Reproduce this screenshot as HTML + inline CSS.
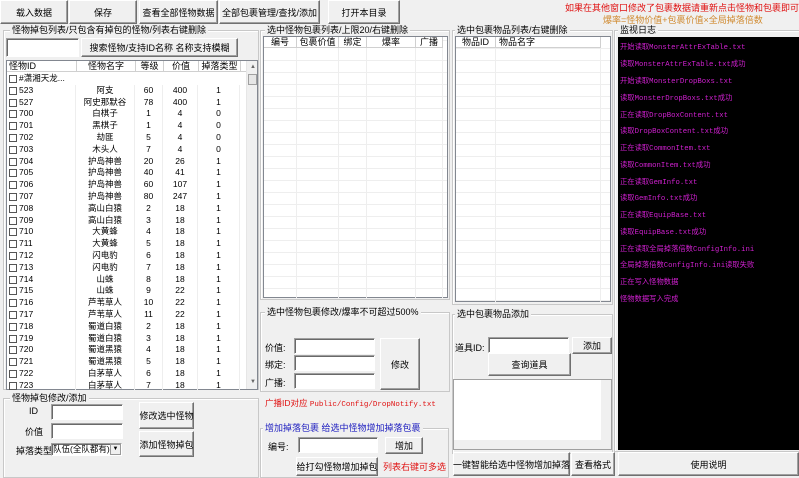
<!DOCTYPE html>
<html><head><meta charset="utf-8">
<style>
*{box-sizing:border-box;margin:0;padding:0}
body{width:799px;height:476px;background:#f0f0f0;position:relative;overflow:hidden;font-family:"Liberation Sans","Noto Sans CJK SC",sans-serif;font-size:9px;color:#000}
.a{position:absolute}
.btn{position:absolute;background:#f0f0f0;border:1px solid;border-color:#fff #707070 #707070 #fff;box-shadow:inset -1px -1px 0 #a0a0a0;display:flex;align-items:center;justify-content:center;font-size:9px;white-space:nowrap}
.tb{position:absolute;background:#fff;border:1px solid;border-color:#a0a0a0 #fff #fff #a0a0a0;box-shadow:inset 1px 1px 0 #696969}
.grp{position:absolute;border:1px solid #c8c8c8;box-shadow:1px 1px 0 #fff inset}
.gt{position:absolute;top:-7px;left:6px;background:#f0f0f0;padding:0 2px;font-size:9px;white-space:nowrap;line-height:12px}
.lst{position:absolute;background:#fff;border:1px solid #828790}
.hd{position:absolute;top:0;height:11px;border-right:1px solid #d0d0d0;border-bottom:1px solid #d0d0d0;background:#fff;font-size:9px;line-height:10px;text-align:center}
.row{position:absolute;left:0;height:11.8px;width:238px;font-size:8.5px;line-height:11.8px}
.row span{position:absolute;top:0;text-align:center;border-right:1px solid #eee;height:100%}
.cb{position:absolute;left:3px;top:2px;width:8px;height:8px;border:1px solid #555;background:#fff}
.log div{position:absolute;left:2px;font-family:"Liberation Mono","Noto Sans CJK SC",monospace;font-size:7.3px;color:#d020d0;white-space:nowrap;line-height:10px}
.red{color:#e01010}
</style></head><body>

<!-- top buttons -->
<div class="btn" style="left:0;top:0;width:68px;height:24px">载入数据</div>
<div class="btn" style="left:69px;top:0;width:68px;height:24px">保存</div>
<div class="btn" style="left:139px;top:0;width:79px;height:24px">查看全部怪物数据</div>
<div class="btn" style="left:219px;top:0;width:101px;height:24px">全部包裹管理/查找/添加</div>
<div class="btn" style="left:328px;top:0;width:72px;height:24px">打开本目录</div>
<div class="a red" style="left:565px;top:1px;font-size:9px;white-space:nowrap">如果在其他窗口修改了包裹数据请重新点击怪物和包裹即可刷新</div>
<div class="a" style="left:603px;top:13px;font-size:9px;color:#d08a30;white-space:nowrap">爆率=怪物价值+包裹价值×全局掉落倍数</div>

<!-- left group -->
<div class="grp" style="left:3px;top:30px;width:256px;height:360px"><div class="gt">怪物掉包列表/只包含有掉包的怪物/列表右键删除</div></div>
<div class="tb" style="left:6px;top:38px;width:73px;height:19px"></div>
<div class="btn" style="left:81px;top:38px;width:157px;height:19px">搜索怪物/支持ID名称 名称支持模糊</div>
<div class="lst" style="left:6px;top:60px;width:252px;height:330px;overflow:hidden">
 <div class="hd" style="left:0;width:70px;text-align:left;padding-left:2px">怪物ID</div>
 <div class="hd" style="left:70px;width:59px">怪物名字</div>
 <div class="hd" style="left:129px;width:28px">等级</div>
 <div class="hd" style="left:157px;width:35px">价值</div>
 <div class="hd" style="left:192px;width:42px">掉落类型</div>
 <div class="hd" style="left:234px;width:6px;border-right:none"></div>
 <div class="a" style="left:239px;top:0;width:12px;height:330px;background:#f0f0f0;border-left:1px solid #e6e6e6"></div>
 <div class="a" style="left:243px;top:3px;font-size:6px;color:#666">▲</div>
 <div class="a" style="left:241px;top:13px;width:9px;height:11px;background:#e6e6e6;border:1px solid #a0a0a0"></div>
 <div class="a" style="left:243px;top:318px;font-size:6px;color:#666">▼</div>
 <div id="rows" class="a" style="left:0;top:13px;width:238px;height:320px"></div>
</div>

<!-- bottom left group -->
<div class="grp" style="left:3px;top:398px;width:256px;height:80px"><div class="gt">怪物掉包修改/添加</div></div>
<div class="a" style="left:29px;top:406px">ID</div>
<div class="tb" style="left:51px;top:404px;width:72px;height:16px"></div>
<div class="a" style="left:25px;top:425px">价值</div>
<div class="tb" style="left:51px;top:423px;width:72px;height:16px"></div>
<div class="a" style="left:16px;top:444px">掉落类型</div>
<div class="tb" style="left:51px;top:443px;width:71px;height:13px;font-size:8.5px;line-height:11px;padding-left:1px;overflow:hidden;white-space:nowrap">队伍(全队都有)</div>
<div class="a" style="left:110px;top:444px;width:11px;height:11px;background:#f0f0f0;border:1px solid #999;font-size:6px;text-align:center;line-height:9px">▼</div>
<div class="btn" style="left:139px;top:402px;width:55px;height:27px">修改选中怪物</div>
<div class="btn" style="left:139px;top:431px;width:55px;height:26px">添加怪物掉包</div>

<!-- middle group -->
<div class="grp" style="left:260px;top:30px;width:190px;height:270px"><div class="gt" style="left:4px">选中怪物包裹列表/上限20/右键删除</div></div>
<div class="lst" style="left:263px;top:36px;width:185px;height:262px;background:#fff repeating-linear-gradient(#fff 0 11px,#eee 11px 12px);background-position:0 12px">
 <div class="hd" style="left:0;width:33px">编号</div>
 <div class="hd" style="left:33px;width:42px">包裹价值</div>
 <div class="hd" style="left:75px;width:28px">绑定</div>
 <div class="hd" style="left:103px;width:49px">爆率</div>
 <div class="hd" style="left:152px;width:27px">广播</div>
 <div class="a" style="left:32px;top:11px;width:1px;height:250px;background:#eee"></div>
 <div class="a" style="left:74px;top:11px;width:1px;height:250px;background:#eee"></div>
 <div class="a" style="left:102px;top:11px;width:1px;height:250px;background:#eee"></div>
 <div class="a" style="left:151px;top:11px;width:1px;height:250px;background:#eee"></div>
 <div class="a" style="left:178px;top:11px;width:1px;height:250px;background:#eee"></div>
</div>

<div class="grp" style="left:260px;top:312px;width:190px;height:80px"><div class="gt" style="left:4px">选中怪物包裹修改/爆率不可超过500%</div></div>
<div class="a" style="left:265px;top:341px">价值:</div>
<div class="a" style="left:265px;top:358px">绑定:</div>
<div class="a" style="left:265px;top:376px">广播:</div>
<div class="tb" style="left:294px;top:338px;width:81px;height:16px"></div>
<div class="tb" style="left:294px;top:355px;width:81px;height:16px"></div>
<div class="tb" style="left:294px;top:373px;width:81px;height:16px"></div>
<div class="btn" style="left:380px;top:338px;width:40px;height:52px">修改</div>
<div class="a red" style="left:265px;top:397px;font-size:8.5px;white-space:nowrap">广播ID对应 <span style="font-family:'Liberation Mono',monospace;font-size:7.5px">Public/Config/DropNotify.txt</span></div>

<div class="grp" style="left:260px;top:428px;width:189px;height:50px"><div class="gt" style="left:2px;color:#2020c0">增加掉落包裹 给选中怪物增加掉落包裹</div></div>
<div class="a" style="left:268px;top:440px">编号:</div>
<div class="tb" style="left:298px;top:437px;width:80px;height:16px"></div>
<div class="btn" style="left:385px;top:437px;width:38px;height:17px">增加</div>
<div class="btn" style="left:296px;top:457px;width:82px;height:19px">给打勾怪物增加掉包</div>
<div class="a red" style="left:383px;top:460px;white-space:nowrap">列表右键可多选</div>

<!-- right-middle group -->
<div class="grp" style="left:452px;top:30px;width:161px;height:275px"><div class="gt" style="left:2px">选中包裹物品列表/右键删除</div></div>
<div class="lst" style="left:455px;top:36px;width:156px;height:266px;background:#fff repeating-linear-gradient(#fff 0 11px,#eee 11px 12px);background-position:0 12px">
 <div class="hd" style="left:0;width:40px">物品ID</div>
 <div class="hd" style="left:40px;width:105px;text-align:left;padding-left:3px">物品名字</div>
 <div class="a" style="left:39px;top:11px;width:1px;height:254px;background:#eee"></div>
 <div class="a" style="left:144px;top:11px;width:1px;height:254px;background:#eee"></div>
</div>

<div class="grp" style="left:452px;top:314px;width:161px;height:140px"><div class="gt" style="left:2px">选中包裹物品添加</div></div>
<div class="a" style="left:455px;top:341px">道具ID:</div>
<div class="tb" style="left:488px;top:337px;width:81px;height:16px"></div>
<div class="btn" style="left:572px;top:337px;width:40px;height:17px">添加</div>
<div class="btn" style="left:488px;top:353px;width:83px;height:23px">查询道具</div>
<div class="a" style="left:453px;top:379px;width:159px;height:71px;background:#fff;border:1px solid #a0a0a0"></div>
<div class="a" style="left:601px;top:380px;width:10px;height:69px;background:#f0f0f0"></div>
<div class="a" style="left:454px;top:440px;width:147px;height:9px;background:#f0f0f0"></div>
<div class="btn" style="left:453px;top:452px;width:117px;height:24px">一键智能给选中怪物增加掉落</div>
<div class="btn" style="left:571px;top:452px;width:44px;height:24px">查看格式</div>

<!-- monitor log -->
<div class="grp" style="left:614px;top:30px;width:186px;height:422px"><div class="gt" style="left:3px">监视日志</div></div>
<div class="a log" style="left:618px;top:37px;width:181px;height:413px;background:#000">
 <div style="top:6px">开始读取MonsterAttrExTable.txt</div>
 <div style="top:23px">读取MonsterAttrExTable.txt成功</div>
 <div style="top:40px">开始读取MonsterDropBoxs.txt</div>
 <div style="top:57px">读取MonsterDropBoxs.txt成功</div>
 <div style="top:74px">正在读取DropBoxContent.txt</div>
 <div style="top:90px">读取DropBoxContent.txt成功</div>
 <div style="top:107px">正在读取CommonItem.txt</div>
 <div style="top:124px">读取CommonItem.txt成功</div>
 <div style="top:141px">正在读取GemInfo.txt</div>
 <div style="top:157px">读取GemInfo.txt成功</div>
 <div style="top:174px">正在读取EquipBase.txt</div>
 <div style="top:191px">读取EquipBase.txt成功</div>
 <div style="top:208px">正在读取全局掉落倍数ConfigInfo.ini</div>
 <div style="top:224px">全局掉落倍数ConfigInfo.ini读取失败</div>
 <div style="top:241px">正在写入怪物数据</div>
 <div style="top:258px">怪物数据写入完成</div>
</div>
<div class="btn" style="left:618px;top:452px;width:181px;height:24px">使用说明</div>

<div id="src" style="display:none"></div>
<div class="a" style="left:0;top:0;width:0;height:0">
</div>
<div style="display:none"></div>
<div class="a" style="left:6px;top:73px;width:233px;height:317px">
<div class="row" style="top:0"><div class="cb"></div><span style="left:0;width:70px;text-align:left;padding-left:13px;border:none">#潇湘天龙...</span></div>
<div class="row" style="top:11.8px"><div class="cb"></div><span style="left:0;width:70px;text-align:left;padding-left:13px">523</span><span style="left:70px;width:59px">阿支</span><span style="left:129px;width:28px">60</span><span style="left:157px;width:35px">400</span><span style="left:192px;width:42px">1</span></div>
<div class="row" style="top:23.6px"><div class="cb"></div><span style="left:0;width:70px;text-align:left;padding-left:13px">527</span><span style="left:70px;width:59px">阿史那默谷</span><span style="left:129px;width:28px">78</span><span style="left:157px;width:35px">400</span><span style="left:192px;width:42px">1</span></div>
<div class="row" style="top:35.4px"><div class="cb"></div><span style="left:0;width:70px;text-align:left;padding-left:13px">700</span><span style="left:70px;width:59px">白棋子</span><span style="left:129px;width:28px">1</span><span style="left:157px;width:35px">4</span><span style="left:192px;width:42px">0</span></div>
<div class="row" style="top:47.2px"><div class="cb"></div><span style="left:0;width:70px;text-align:left;padding-left:13px">701</span><span style="left:70px;width:59px">黑棋子</span><span style="left:129px;width:28px">1</span><span style="left:157px;width:35px">4</span><span style="left:192px;width:42px">0</span></div>
<div class="row" style="top:59px"><div class="cb"></div><span style="left:0;width:70px;text-align:left;padding-left:13px">702</span><span style="left:70px;width:59px">劫匪</span><span style="left:129px;width:28px">5</span><span style="left:157px;width:35px">4</span><span style="left:192px;width:42px">0</span></div>
<div class="row" style="top:70.8px"><div class="cb"></div><span style="left:0;width:70px;text-align:left;padding-left:13px">703</span><span style="left:70px;width:59px">木头人</span><span style="left:129px;width:28px">7</span><span style="left:157px;width:35px">4</span><span style="left:192px;width:42px">0</span></div>
<div class="row" style="top:82.6px"><div class="cb"></div><span style="left:0;width:70px;text-align:left;padding-left:13px">704</span><span style="left:70px;width:59px">护岛神兽</span><span style="left:129px;width:28px">20</span><span style="left:157px;width:35px">26</span><span style="left:192px;width:42px">1</span></div>
<div class="row" style="top:94.4px"><div class="cb"></div><span style="left:0;width:70px;text-align:left;padding-left:13px">705</span><span style="left:70px;width:59px">护岛神兽</span><span style="left:129px;width:28px">40</span><span style="left:157px;width:35px">41</span><span style="left:192px;width:42px">1</span></div>
<div class="row" style="top:106.2px"><div class="cb"></div><span style="left:0;width:70px;text-align:left;padding-left:13px">706</span><span style="left:70px;width:59px">护岛神兽</span><span style="left:129px;width:28px">60</span><span style="left:157px;width:35px">107</span><span style="left:192px;width:42px">1</span></div>
<div class="row" style="top:118px"><div class="cb"></div><span style="left:0;width:70px;text-align:left;padding-left:13px">707</span><span style="left:70px;width:59px">护岛神兽</span><span style="left:129px;width:28px">80</span><span style="left:157px;width:35px">247</span><span style="left:192px;width:42px">1</span></div>
<div class="row" style="top:129.8px"><div class="cb"></div><span style="left:0;width:70px;text-align:left;padding-left:13px">708</span><span style="left:70px;width:59px">高山白猿</span><span style="left:129px;width:28px">2</span><span style="left:157px;width:35px">18</span><span style="left:192px;width:42px">1</span></div>
<div class="row" style="top:141.6px"><div class="cb"></div><span style="left:0;width:70px;text-align:left;padding-left:13px">709</span><span style="left:70px;width:59px">高山白猿</span><span style="left:129px;width:28px">3</span><span style="left:157px;width:35px">18</span><span style="left:192px;width:42px">1</span></div>
<div class="row" style="top:153.4px"><div class="cb"></div><span style="left:0;width:70px;text-align:left;padding-left:13px">710</span><span style="left:70px;width:59px">大黄蜂</span><span style="left:129px;width:28px">4</span><span style="left:157px;width:35px">18</span><span style="left:192px;width:42px">1</span></div>
<div class="row" style="top:165.2px"><div class="cb"></div><span style="left:0;width:70px;text-align:left;padding-left:13px">711</span><span style="left:70px;width:59px">大黄蜂</span><span style="left:129px;width:28px">5</span><span style="left:157px;width:35px">18</span><span style="left:192px;width:42px">1</span></div>
<div class="row" style="top:177px"><div class="cb"></div><span style="left:0;width:70px;text-align:left;padding-left:13px">712</span><span style="left:70px;width:59px">闪电豹</span><span style="left:129px;width:28px">6</span><span style="left:157px;width:35px">18</span><span style="left:192px;width:42px">1</span></div>
<div class="row" style="top:188.8px"><div class="cb"></div><span style="left:0;width:70px;text-align:left;padding-left:13px">713</span><span style="left:70px;width:59px">闪电豹</span><span style="left:129px;width:28px">7</span><span style="left:157px;width:35px">18</span><span style="left:192px;width:42px">1</span></div>
<div class="row" style="top:200.6px"><div class="cb"></div><span style="left:0;width:70px;text-align:left;padding-left:13px">714</span><span style="left:70px;width:59px">山蛛</span><span style="left:129px;width:28px">8</span><span style="left:157px;width:35px">18</span><span style="left:192px;width:42px">1</span></div>
<div class="row" style="top:212.4px"><div class="cb"></div><span style="left:0;width:70px;text-align:left;padding-left:13px">715</span><span style="left:70px;width:59px">山蛛</span><span style="left:129px;width:28px">9</span><span style="left:157px;width:35px">22</span><span style="left:192px;width:42px">1</span></div>
<div class="row" style="top:224.2px"><div class="cb"></div><span style="left:0;width:70px;text-align:left;padding-left:13px">716</span><span style="left:70px;width:59px">芦苇草人</span><span style="left:129px;width:28px">10</span><span style="left:157px;width:35px">22</span><span style="left:192px;width:42px">1</span></div>
<div class="row" style="top:236px"><div class="cb"></div><span style="left:0;width:70px;text-align:left;padding-left:13px">717</span><span style="left:70px;width:59px">芦苇草人</span><span style="left:129px;width:28px">11</span><span style="left:157px;width:35px">22</span><span style="left:192px;width:42px">1</span></div>
<div class="row" style="top:247.8px"><div class="cb"></div><span style="left:0;width:70px;text-align:left;padding-left:13px">718</span><span style="left:70px;width:59px">蜀道白猿</span><span style="left:129px;width:28px">2</span><span style="left:157px;width:35px">18</span><span style="left:192px;width:42px">1</span></div>
<div class="row" style="top:259.6px"><div class="cb"></div><span style="left:0;width:70px;text-align:left;padding-left:13px">719</span><span style="left:70px;width:59px">蜀道白猿</span><span style="left:129px;width:28px">3</span><span style="left:157px;width:35px">18</span><span style="left:192px;width:42px">1</span></div>
<div class="row" style="top:271.4px"><div class="cb"></div><span style="left:0;width:70px;text-align:left;padding-left:13px">720</span><span style="left:70px;width:59px">蜀道黑猿</span><span style="left:129px;width:28px">4</span><span style="left:157px;width:35px">18</span><span style="left:192px;width:42px">1</span></div>
<div class="row" style="top:283.2px"><div class="cb"></div><span style="left:0;width:70px;text-align:left;padding-left:13px">721</span><span style="left:70px;width:59px">蜀道黑猿</span><span style="left:129px;width:28px">5</span><span style="left:157px;width:35px">18</span><span style="left:192px;width:42px">1</span></div>
<div class="row" style="top:295px"><div class="cb"></div><span style="left:0;width:70px;text-align:left;padding-left:13px">722</span><span style="left:70px;width:59px">白茅草人</span><span style="left:129px;width:28px">6</span><span style="left:157px;width:35px">18</span><span style="left:192px;width:42px">1</span></div>
<div class="row" style="top:306.8px;height:10px;overflow:hidden"><div class="cb"></div><span style="left:0;width:70px;text-align:left;padding-left:13px">723</span><span style="left:70px;width:59px">白茅草人</span><span style="left:129px;width:28px">7</span><span style="left:157px;width:35px">18</span><span style="left:192px;width:42px">1</span></div>
</div>
</body></html>
